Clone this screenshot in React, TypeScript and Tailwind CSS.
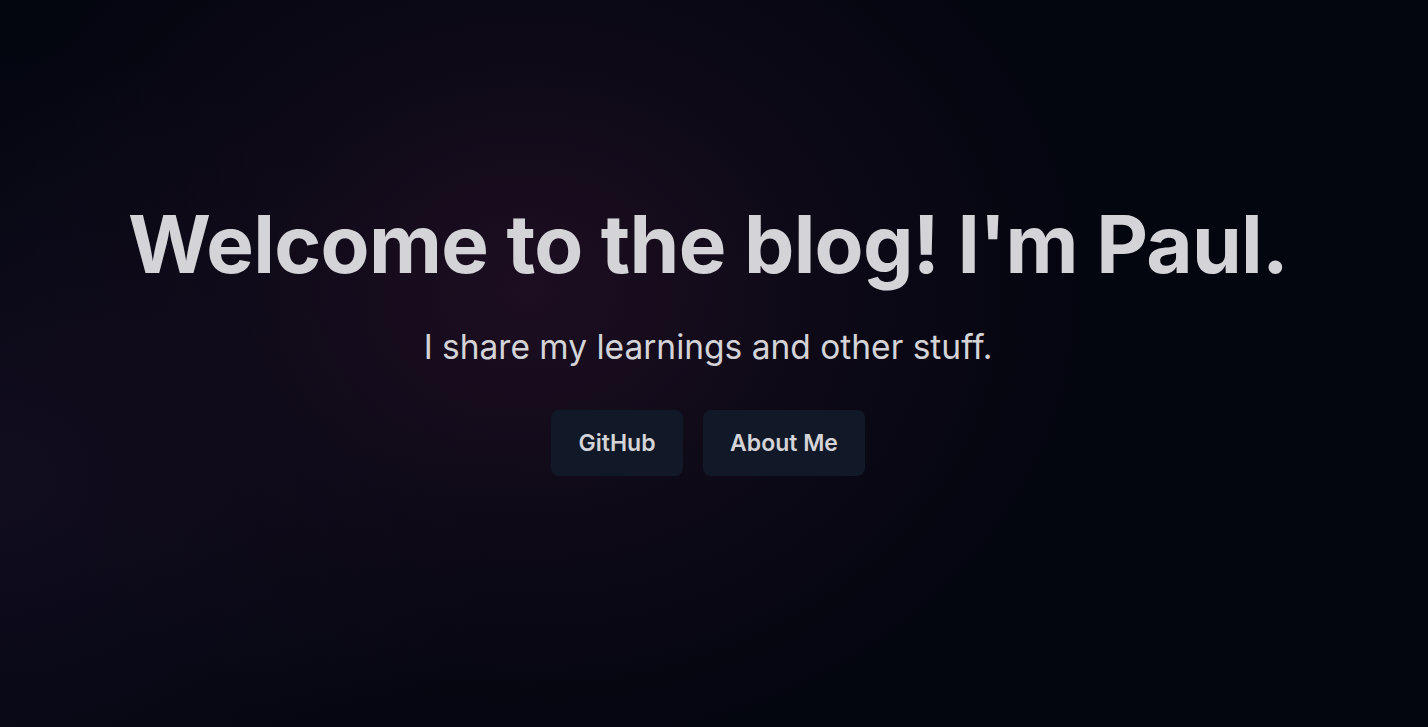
export default function App() {
  return (
    <main
      className="min-h-screen w-full bg-[#03050f] bg-[radial-gradient(ellipse_40%_65%_at_37%_40%,#1d0e21_0%,rgba(20,12,28,0.7)_45%,transparent_100%),radial-gradient(ellipse_35%_60%_at_0%_66%,#110d1f_0%,transparent_100%)] text-[#d4d4d8]"
      style={{ fontFamily: "Inter, 'Noto Sans', sans-serif" }}
    >
      <div className="flex flex-col items-center pr-3 pt-[196px] pb-[251px]">
        <h1 className="text-[80px] font-bold leading-[96px] tracking-[-0.7px]">
          Welcome to the blog! I&apos;m Paul.
        </h1>

        <p className="mt-[34px] text-[33.5px] leading-[42px]">
          I share my learnings and other stuff.
        </p>

        <div className="mt-[42px] flex gap-5">
          <a className="rounded-lg bg-[#111827] px-[27.5px] py-[19px] text-[23px] font-semibold leading-[28px]">
            GitHub
          </a>
          <a className="rounded-lg bg-[#111827] px-[27px] py-[19px] text-[23px] font-semibold leading-[28px]">
            About Me
          </a>
        </div>
      </div>
    </main>
  );
}
